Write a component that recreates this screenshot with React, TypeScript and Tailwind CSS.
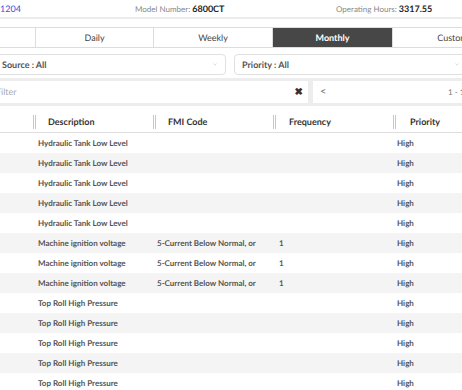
const ROWS = [
  ...Array(5).fill({ desc: 'Hydraulic Tank Low Level', fmi: '', freq: '' }),
  ...Array(3).fill({ desc: 'Machine ignition voltage', fmi: '5-Current Below Normal, or', freq: '1' }),
  ...Array(5).fill({ desc: 'Top Roll High Pressure', fmi: '', freq: '' }),
];

const TABS = [
  { label: '', w: 'w-[119px] -ml-[84px]' },
  { label: 'Daily', w: 'w-[118px]' },
  { label: 'Weekly', w: 'w-[119px]' },
  { label: 'Monthly', w: 'w-[120px]', active: true },
  { label: 'Custom', w: 'w-[120px]' },
];

function Grip() {
  return (
    <span className="flex h-[14px] w-[3px] shrink-0 justify-between">
      <span className="w-px bg-[#c8c8c8]" />
      <span className="w-px bg-[#c8c8c8]" />
    </span>
  );
}

function Chevron() {
  return (
    <svg width="4" height="3" viewBox="0 0 4 3" className="shrink-0">
      <path d="M0.5 0.5 L2 2.2 L3.5 0.5" fill="none" stroke="#cfcfcf" strokeWidth="0.7" />
    </svg>
  );
}

export default function App() {
  return (
    <div
      className="h-[390px] w-[462px] overflow-hidden bg-white text-[#444] antialiased [text-rendering:geometricPrecision]"
      style={{ fontFamily: 'Lato, "Liberation Sans", sans-serif' }}
    >
      {/* header info */}
      <div className="flex h-[19px] items-center border-b-2 border-[#ececec] text-[8px] text-[#888]">
        <span className="w-[135px] text-[9px] text-[#3550d8]">1204</span>
        <span className="w-[201px]">
          Model Number: <span className="text-[9px] font-bold text-[#222]">6800CT</span>
        </span>
        <span>
          Operating Hours: <span className="text-[9px] font-bold text-[#222]">3317.55</span>
        </span>
      </div>

      {/* period tabs */}
      <div className="mt-[8px] flex h-[21px] border-y border-[#dcdcdc] text-[9px]">
        {TABS.map((t, i) => (
          <div
            key={i}
            className={`${t.w} flex shrink-0 items-center justify-center ${i > 0 ? 'border-l border-[#dcdcdc]' : ''} ${
              t.active ? 'bg-[#474747] font-bold text-white' : 'text-[#444]'
            }`}
          >
            {t.label}
          </div>
        ))}
      </div>

      {/* selects */}
      <div className="mt-[6px] flex h-[21px] gap-[8px] text-[9px] font-bold text-[#555]">
        <div className="-ml-[8px] flex w-[234px] shrink-0 items-center justify-between rounded-sm border border-[#e0e0e0] pl-[9px] pr-[8px]">
          <span>Source : All</span>
          <Chevron />
        </div>
        <div className="flex w-[236px] shrink-0 items-center justify-between rounded-sm border border-[#e0e0e0] pl-[7px] pr-[10px]">
          <span>Priority : All</span>
          <Chevron />
        </div>
      </div>

      {/* filter toolbar */}
      <div className="mt-[3px] flex h-[28px] items-center gap-[5px] bg-[#ededed] text-[9px]">
        <div className="-ml-[10px] flex h-[22px] w-[318px] shrink-0 items-center justify-between bg-white pl-[6px] pr-[5px]">
          <span className="text-[#aaa]">Filter</span>
          <span className="text-[10px] font-bold text-[#333]">✖</span>
        </div>
        <div className="flex h-[22px] w-[160px] shrink-0 items-center justify-between bg-white pl-[7px] pr-[4px] text-[#777]">
          <span className="text-[11px]">&lt;</span>
          <span className="text-[8px]">1 - 13</span>
        </div>
      </div>

      {/* table */}
      <div className="mt-[6px] text-[#555]">
        <div className="flex h-[21px] items-center border-b border-[#dedede] text-[9px] font-bold text-[#333]">
          <div className="w-[33px] shrink-0" />
          {['Description', 'FMI Code', 'Frequency', 'Priority'].map((h, i) => (
            <div key={h} className="flex w-[120px] shrink-0 items-center">
              <Grip />
              <span className={i === 3 ? 'ml-[14px]' : i === 2 ? 'ml-[13px]' : 'ml-[12px]'}>{h}</span>
            </div>
          ))}
        </div>
        {ROWS.map((r, i) => (
          <div key={i} className={`flex h-[20px] items-center text-[8px] font-bold text-[#555] ${i % 2 === 1 ? 'bg-[#f4f4f4]' : 'bg-white'}`}>
            <div className="w-[33px] shrink-0" />
            <div className="w-[120px] shrink-0 pl-[5px]">{r.desc}</div>
            <div className="w-[120px] shrink-0 pl-[4px]">{r.fmi}</div>
            <div className="w-[120px] shrink-0 pl-[6px]">{r.freq}</div>
            <div className="w-[120px] shrink-0 pl-[4px]">High</div>
          </div>
        ))}
      </div>
    </div>
  );
}
